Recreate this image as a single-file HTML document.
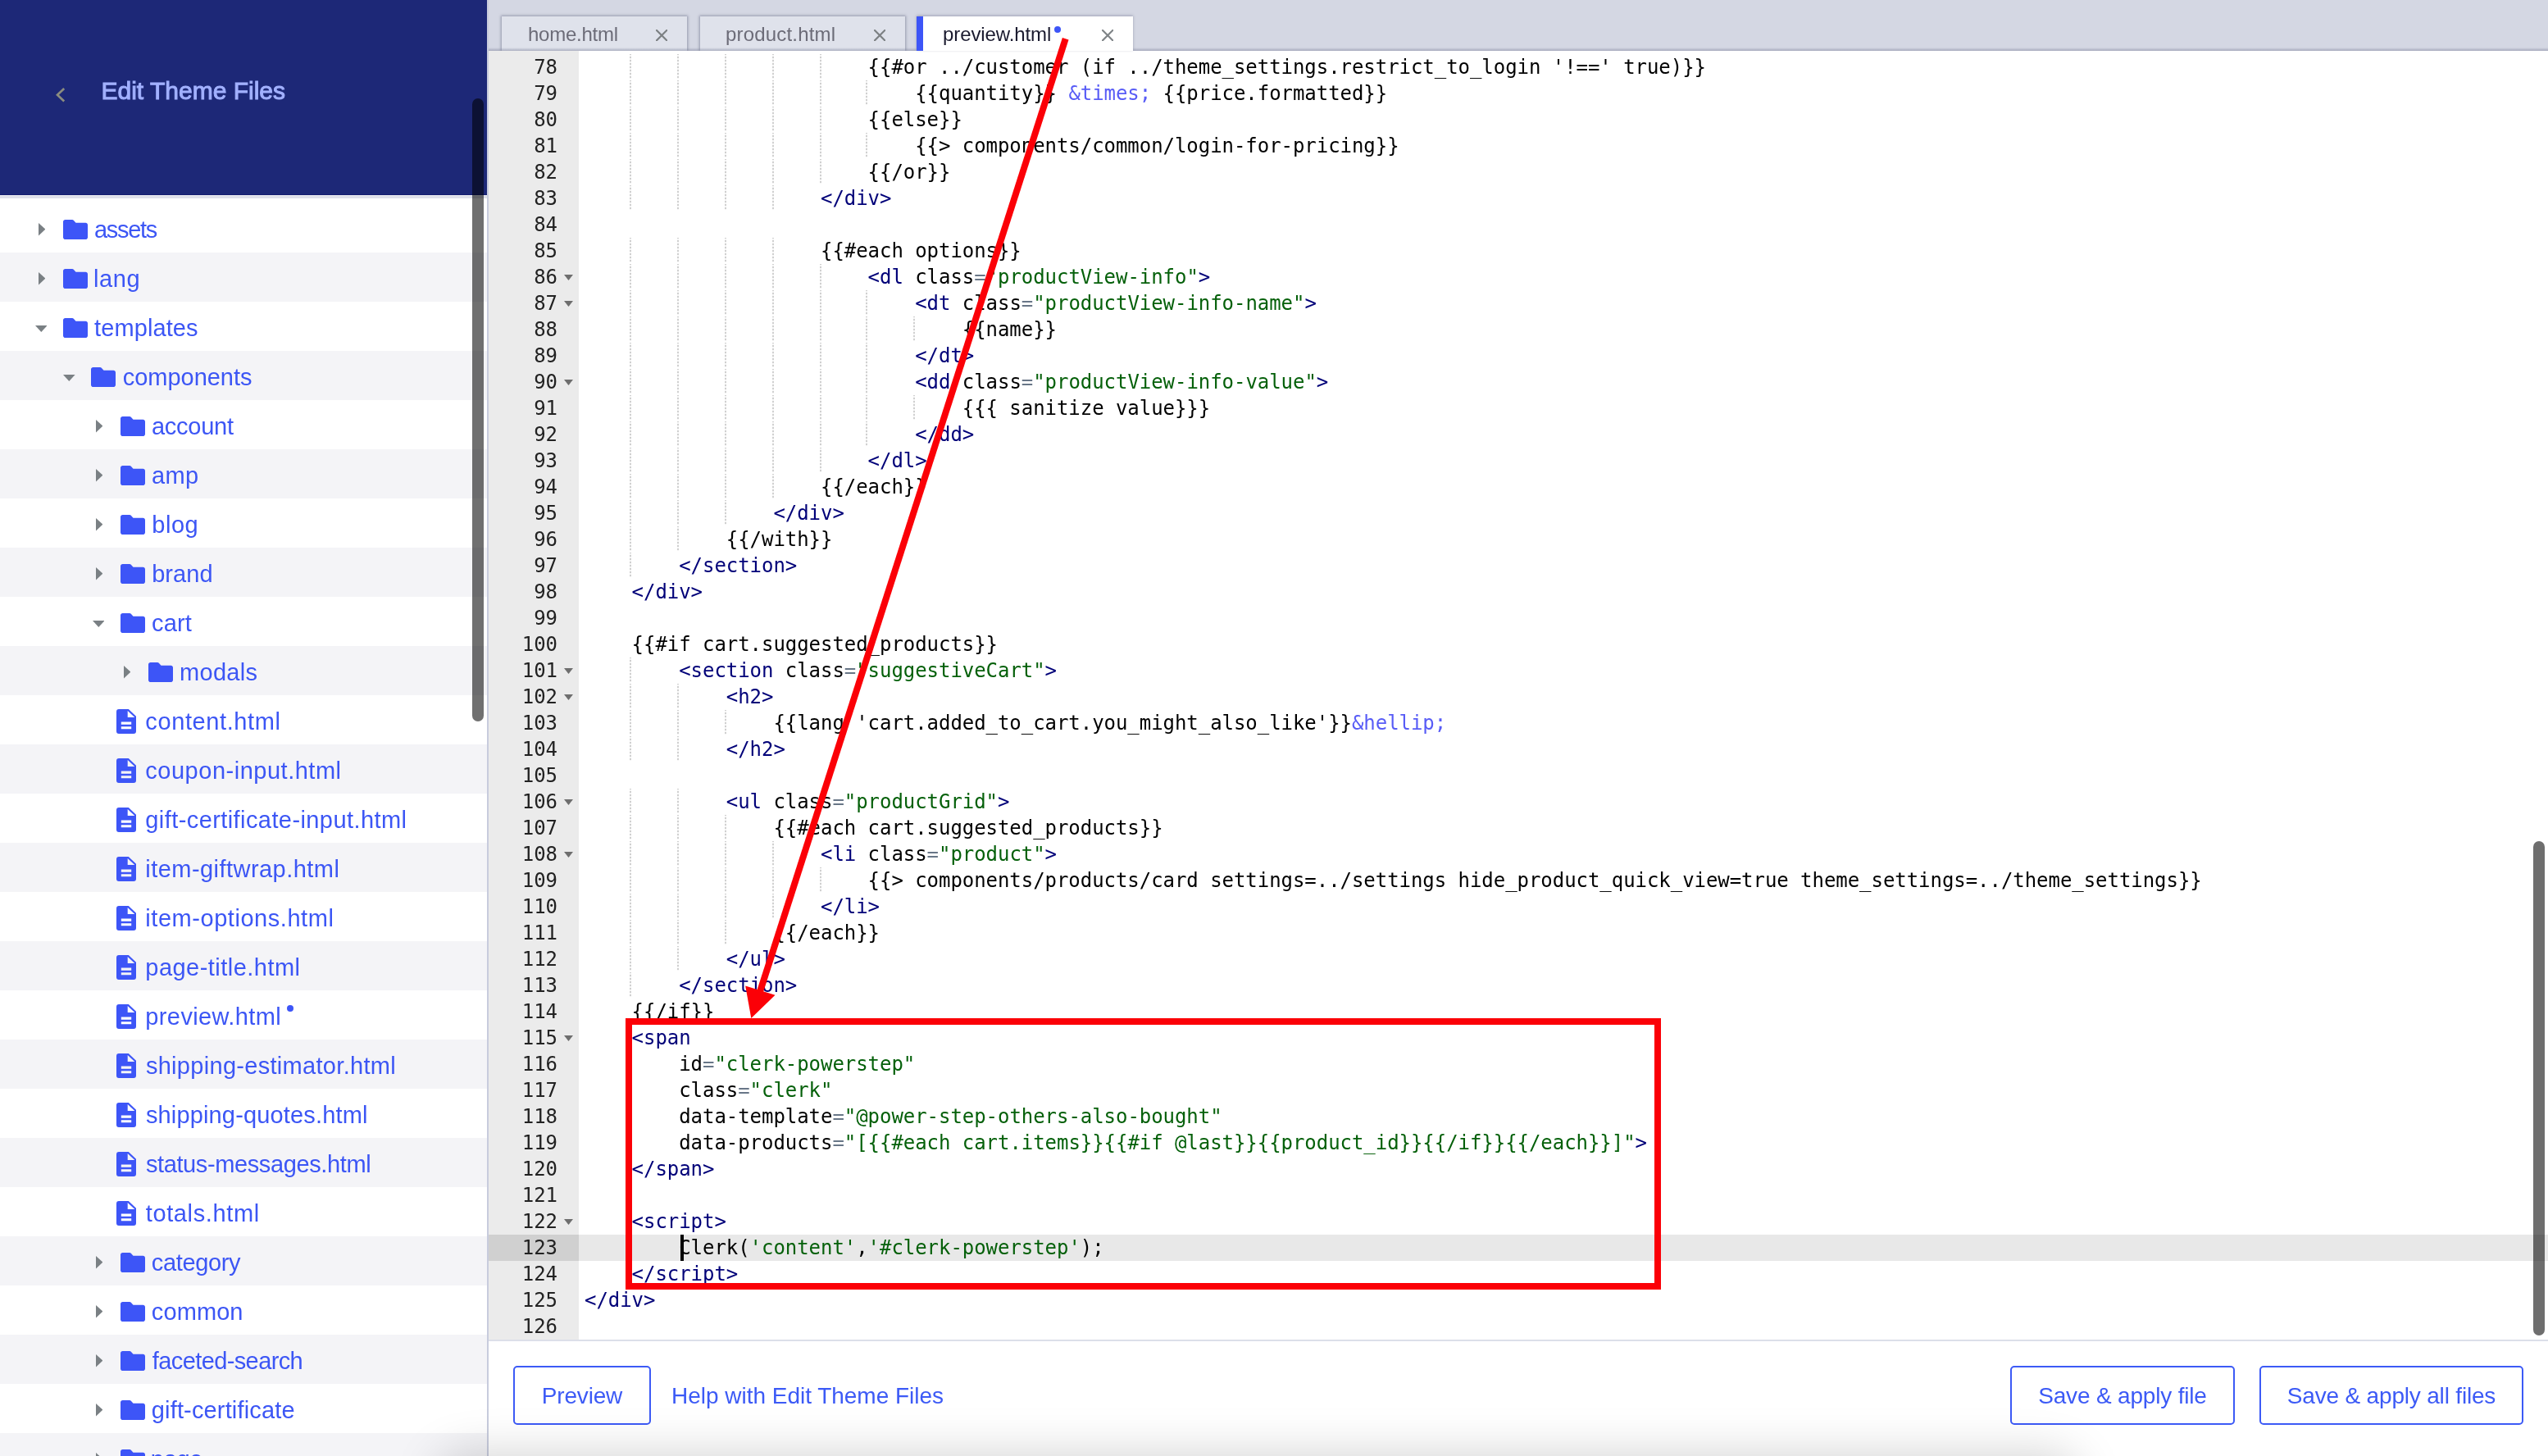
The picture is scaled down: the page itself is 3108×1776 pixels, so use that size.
<!DOCTYPE html>
<html lang="en"><head><meta charset="utf-8"><title>Edit Theme Files</title>
<style>
*{box-sizing:border-box;margin:0;padding:0}
html,body{width:3108px;height:1776px;overflow:hidden;background:#fff}
body{position:relative;will-change:transform;font-family:"Liberation Sans",sans-serif;-webkit-font-smoothing:antialiased}
#side{position:absolute;left:0;top:0;width:594px;height:1776px;background:#fff;overflow:hidden}
#hdr{position:absolute;left:0;top:0;width:594px;height:238px;background:#1d2877;border-bottom:1px solid #141d70}
#hdr .shadow{position:absolute;left:0;top:238px;width:594px;height:4px;background:linear-gradient(#ebecf2 0,#ebecf2 1px,#dfe1ea 1px,#dfe1ea 4px)}
#back{position:absolute;left:68px;top:107px}
#title{position:absolute;left:123.5px;top:88px;font-size:30px;line-height:46px;color:#a2b1ff;-webkit-text-stroke:1px #a2b1ff;white-space:nowrap}
.row{position:absolute;left:0;width:594px;height:60px;background:#fff}
.row.alt{background:#f4f4f7}
.row svg{position:absolute}
.row .ar path{fill:#7a8084}
.row .fo path,.row .fi path{fill:#3d55f7}
.lb{position:absolute;top:0;line-height:64px;font-size:29px;color:#3c56f5;white-space:nowrap}
.dot{display:inline-block;width:8px;height:8px;border-radius:50%;background:#3d55f7;margin-left:7px;vertical-align:top;margin-top:18px}
#sscroll{position:absolute;left:576px;top:120px;width:14px;height:760px;border-radius:7px;background:rgba(0,0,0,.56)}
#vline{position:absolute;left:594px;top:0;width:2px;height:1776px;background:#c8ccdd}
#tabs{position:absolute;left:596px;top:0;width:2512px;height:62px;background:#d4d7e3}
#tabs .sh{position:absolute;left:0;bottom:0;width:100%;height:4px;background:linear-gradient(rgba(120,125,150,0),rgba(120,125,150,.5));z-index:1}
.tab{position:absolute;top:20px;height:42px;background:#dfe2eb;box-shadow:0 0 3px 1px rgba(105,110,135,.6);font-size:24px;color:#6c6c78;white-space:nowrap}
.tab span{position:absolute;top:7px;line-height:30px}
.tab.on{background:#fff;color:#1b1b2f;box-shadow:0 -1px 3px 0 rgba(105,110,135,.5);z-index:2}
.tab.on:before{content:"";position:absolute;left:0;top:0;width:8px;height:42px;background:#3d55f7}
.tab svg{position:absolute;top:16px}
#ed{position:absolute;left:596px;top:62px;width:2512px;height:1572px;background:#fff;overflow:hidden;font-family:"DejaVu Sans Mono","Liberation Mono",monospace;font-size:24px}
#gutter{position:absolute;left:0;top:0;width:110px;height:1572px;background:#ebebeb;color:#222}
.gl{position:absolute;left:0;width:110px;height:32px;line-height:32px}
.gl span{position:absolute;right:26px;top:0;letter-spacing:-0.05px}
.gl.act{background:#d0d0d0}
.fd{position:absolute;left:92px;top:13px}
.fd path{fill:#6e6e6e}
#code{position:absolute;left:110px;top:0;width:2402px;height:1572px}
.cl{position:absolute;left:0;width:2402px;height:32px;line-height:32px;white-space:pre}
.cl.act{background:#e8e8e8}
.tx{position:absolute;left:7px;top:0;letter-spacing:-0.05px;color:#000}
.ig{position:absolute;top:0;width:2px;height:30px;background:repeating-linear-gradient(#d0d0d0 0,#d0d0d0 2px,#f6f6f6 2px,#f6f6f6 4px);background-position:0 -1px;background-size:2px 32px}
.t{color:#000078}.o{color:#687687}.s{color:#05600a}.e{color:#585cf6}
#cursor{position:absolute;left:124px;top:1444px;width:4px;height:32px;background:#000}
#escroll{position:absolute;left:2494px;top:964px;width:14px;height:603px;border-radius:7px;background:rgba(0,0,0,.57)}
#hline{position:absolute;left:596px;top:1634px;width:2512px;height:2px;background:#dcdfe9}
#bar{position:absolute;left:596px;top:1636px;width:2512px;height:140px;background:#fff}
.btn{position:absolute;top:30px;height:72px;border:2px solid #3c5af6;border-radius:5px;color:#3c5af6;font-size:28px;line-height:70px;text-align:center;white-space:nowrap;letter-spacing:-0.18px}
#help{position:absolute;left:223px;top:31px;line-height:72px;font-size:28px;color:#3c5af6;white-space:nowrap;letter-spacing:-0.02px}
#anno{position:absolute;left:0;top:0;z-index:10}
#bshadow{position:absolute;left:560px;top:1800px;width:1950px;height:30px;border-radius:15px;box-shadow:0 0 55px 28px rgba(0,0,0,.17);z-index:5}

</style></head><body>
<div id="side">
<div class="row" style="top:248px"><svg class="ar" style="left:46.6px;top:24.4px" width="8.4" height="15.4" viewBox="0 0 8.4 15.4"><path d="M0 0v15.4L8.4 7.7z"/></svg><svg class="fo" style="left:77px;top:20px" width="30" height="24" viewBox="0 0 30 24"><path d="M2.6 0h8.4c.8 0 1.500.3 2 .9l2.500 2.900h11.900c1.400 0 2.600 1.200 2.600 2.600v15c0 1.400-1.200 2.600-2.600 2.600h-24.800c-1.400 0-2.600-1.200-2.600-2.600v-18.800c0-1.400 1.200-2.600 2.600-2.600z"/></svg><span class="lb" style="left:115.00px;letter-spacing:-1.300px">assets</span></div>
<div class="row alt" style="top:308px"><svg class="ar" style="left:46.6px;top:24.4px" width="8.4" height="15.4" viewBox="0 0 8.4 15.4"><path d="M0 0v15.4L8.4 7.7z"/></svg><svg class="fo" style="left:77px;top:20px" width="30" height="24" viewBox="0 0 30 24"><path d="M2.6 0h8.4c.8 0 1.500.3 2 .9l2.500 2.900h11.900c1.400 0 2.600 1.200 2.600 2.600v15c0 1.400-1.200 2.600-2.600 2.600h-24.800c-1.400 0-2.600-1.200-2.600-2.600v-18.800c0-1.400 1.200-2.600 2.600-2.600z"/></svg><span class="lb" style="left:114.00px;letter-spacing:0.566px">lang</span></div>
<div class="row" style="top:368px"><svg class="ar" style="left:42.8px;top:28.6px" width="14.6" height="8" viewBox="0 0 14.6 8"><path d="M0 0h14.6L7.3 8z"/></svg><svg class="fo" style="left:77px;top:20px" width="30" height="24" viewBox="0 0 30 24"><path d="M2.6 0h8.4c.8 0 1.500.3 2 .9l2.500 2.900h11.900c1.400 0 2.600 1.200 2.600 2.600v15c0 1.400-1.200 2.600-2.600 2.600h-24.800c-1.400 0-2.600-1.200-2.600-2.600v-18.800c0-1.400 1.200-2.600 2.600-2.600z"/></svg><span class="lb" style="left:115.00px;letter-spacing:0.104px">templates</span></div>
<div class="row alt" style="top:428px"><svg class="ar" style="left:77.1px;top:28.6px" width="14.6" height="8" viewBox="0 0 14.6 8"><path d="M0 0h14.6L7.3 8z"/></svg><svg class="fo" style="left:111.3px;top:20px" width="30" height="24" viewBox="0 0 30 24"><path d="M2.6 0h8.4c.8 0 1.500.3 2 .9l2.500 2.900h11.900c1.400 0 2.600 1.200 2.600 2.600v15c0 1.400-1.200 2.600-2.600 2.600h-24.800c-1.400 0-2.600-1.200-2.600-2.600v-18.800c0-1.400 1.200-2.600 2.600-2.600z"/></svg><span class="lb" style="left:149.80px;letter-spacing:-0.032px">components</span></div>
<div class="row" style="top:488px"><svg class="ar" style="left:116.6px;top:24.4px" width="8.4" height="15.4" viewBox="0 0 8.4 15.4"><path d="M0 0v15.4L8.4 7.7z"/></svg><svg class="fo" style="left:147px;top:20px" width="30" height="24" viewBox="0 0 30 24"><path d="M2.6 0h8.4c.8 0 1.500.3 2 .9l2.500 2.900h11.900c1.400 0 2.600 1.200 2.600 2.600v15c0 1.400-1.200 2.600-2.600 2.600h-24.800c-1.400 0-2.600-1.200-2.600-2.600v-18.800c0-1.400 1.200-2.600 2.600-2.600z"/></svg><span class="lb" style="left:185.00px;letter-spacing:-0.267px">account</span></div>
<div class="row alt" style="top:548px"><svg class="ar" style="left:116.6px;top:24.4px" width="8.4" height="15.4" viewBox="0 0 8.4 15.4"><path d="M0 0v15.4L8.4 7.7z"/></svg><svg class="fo" style="left:147px;top:20px" width="30" height="24" viewBox="0 0 30 24"><path d="M2.6 0h8.4c.8 0 1.500.3 2 .9l2.500 2.900h11.900c1.400 0 2.600 1.200 2.600 2.600v15c0 1.400-1.200 2.600-2.600 2.600h-24.800c-1.400 0-2.600-1.200-2.600-2.600v-18.800c0-1.400 1.200-2.600 2.600-2.600z"/></svg><span class="lb" style="left:185.00px;letter-spacing:0.300px">amp</span></div>
<div class="row" style="top:608px"><svg class="ar" style="left:116.6px;top:24.4px" width="8.4" height="15.4" viewBox="0 0 8.4 15.4"><path d="M0 0v15.4L8.4 7.7z"/></svg><svg class="fo" style="left:147px;top:20px" width="30" height="24" viewBox="0 0 30 24"><path d="M2.6 0h8.4c.8 0 1.500.3 2 .9l2.500 2.900h11.900c1.400 0 2.600 1.200 2.600 2.600v15c0 1.400-1.200 2.600-2.600 2.600h-24.800c-1.400 0-2.600-1.200-2.600-2.600v-18.800c0-1.400 1.200-2.600 2.600-2.600z"/></svg><span class="lb" style="left:185.20px;letter-spacing:0.566px">blog</span></div>
<div class="row alt" style="top:668px"><svg class="ar" style="left:116.6px;top:24.4px" width="8.4" height="15.4" viewBox="0 0 8.4 15.4"><path d="M0 0v15.4L8.4 7.7z"/></svg><svg class="fo" style="left:147px;top:20px" width="30" height="24" viewBox="0 0 30 24"><path d="M2.6 0h8.4c.8 0 1.500.3 2 .9l2.500 2.900h11.900c1.400 0 2.600 1.200 2.600 2.600v15c0 1.400-1.200 2.600-2.600 2.600h-24.800c-1.400 0-2.600-1.200-2.600-2.600v-18.800c0-1.400 1.200-2.600 2.600-2.600z"/></svg><span class="lb" style="left:185.20px;letter-spacing:0.050px">brand</span></div>
<div class="row" style="top:728px"><svg class="ar" style="left:112.8px;top:28.6px" width="14.6" height="8" viewBox="0 0 14.6 8"><path d="M0 0h14.6L7.3 8z"/></svg><svg class="fo" style="left:147px;top:20px" width="30" height="24" viewBox="0 0 30 24"><path d="M2.6 0h8.4c.8 0 1.500.3 2 .9l2.500 2.900h11.900c1.400 0 2.600 1.200 2.600 2.600v15c0 1.400-1.200 2.600-2.600 2.600h-24.800c-1.400 0-2.600-1.200-2.600-2.600v-18.800c0-1.400 1.200-2.600 2.600-2.600z"/></svg><span class="lb" style="left:185.00px;letter-spacing:0.166px">cart</span></div>
<div class="row alt" style="top:788px"><svg class="ar" style="left:150.79999999999998px;top:24.4px" width="8.4" height="15.4" viewBox="0 0 8.4 15.4"><path d="M0 0v15.4L8.4 7.7z"/></svg><svg class="fo" style="left:181.2px;top:20px" width="30" height="24" viewBox="0 0 30 24"><path d="M2.6 0h8.4c.8 0 1.500.3 2 .9l2.500 2.900h11.900c1.400 0 2.600 1.200 2.600 2.600v15c0 1.400-1.200 2.600-2.600 2.600h-24.800c-1.400 0-2.600-1.200-2.600-2.600v-18.800c0-1.400 1.200-2.600 2.600-2.600z"/></svg><span class="lb" style="left:219.00px;letter-spacing:0.300px">modals</span></div>
<div class="row" style="top:848px"><svg class="fi" style="left:142px;top:17px" width="24" height="30" viewBox="0 0 24 30"><path fill-rule="evenodd" d="M3 0h11.800l9.200 8.800v18.200a3 3 0 0 1-3 3H3a3 3 0 0 1-3-3V3a3 3 0 0 1 3-3zm10.700 2.100v7.900h8.600zM5.800 15.500v3.300h12.400v-3.300zm0 5.700v3h12.400v-3z"/></svg><span class="lb" style="left:177.30px;letter-spacing:0.609px">content.html</span></div>
<div class="row alt" style="top:908px"><svg class="fi" style="left:142px;top:17px" width="24" height="30" viewBox="0 0 24 30"><path fill-rule="evenodd" d="M3 0h11.800l9.200 8.800v18.200a3 3 0 0 1-3 3H3a3 3 0 0 1-3-3V3a3 3 0 0 1 3-3zm10.700 2.100v7.900h8.600zM5.800 15.500v3.300h12.400v-3.300zm0 5.700v3h12.400v-3z"/></svg><span class="lb" style="left:177.30px;letter-spacing:0.514px">coupon-input.html</span></div>
<div class="row" style="top:968px"><svg class="fi" style="left:142px;top:17px" width="24" height="30" viewBox="0 0 24 30"><path fill-rule="evenodd" d="M3 0h11.800l9.200 8.800v18.200a3 3 0 0 1-3 3H3a3 3 0 0 1-3-3V3a3 3 0 0 1 3-3zm10.700 2.100v7.900h8.600zM5.800 15.500v3.300h12.400v-3.300zm0 5.700v3h12.400v-3z"/></svg><span class="lb" style="left:177.30px;letter-spacing:0.416px">gift-certificate-input.html</span></div>
<div class="row alt" style="top:1028px"><svg class="fi" style="left:142px;top:17px" width="24" height="30" viewBox="0 0 24 30"><path fill-rule="evenodd" d="M3 0h11.800l9.200 8.800v18.200a3 3 0 0 1-3 3H3a3 3 0 0 1-3-3V3a3 3 0 0 1 3-3zm10.700 2.100v7.900h8.600zM5.800 15.500v3.300h12.400v-3.300zm0 5.700v3h12.400v-3z"/></svg><span class="lb" style="left:177.30px;letter-spacing:0.454px">item-giftwrap.html</span></div>
<div class="row" style="top:1088px"><svg class="fi" style="left:142px;top:17px" width="24" height="30" viewBox="0 0 24 30"><path fill-rule="evenodd" d="M3 0h11.800l9.200 8.800v18.200a3 3 0 0 1-3 3H3a3 3 0 0 1-3-3V3a3 3 0 0 1 3-3zm10.700 2.100v7.900h8.600zM5.800 15.500v3.300h12.400v-3.300zm0 5.700v3h12.400v-3z"/></svg><span class="lb" style="left:177.30px;letter-spacing:0.549px">item-options.html</span></div>
<div class="row alt" style="top:1148px"><svg class="fi" style="left:142px;top:17px" width="24" height="30" viewBox="0 0 24 30"><path fill-rule="evenodd" d="M3 0h11.800l9.200 8.800v18.200a3 3 0 0 1-3 3H3a3 3 0 0 1-3-3V3a3 3 0 0 1 3-3zm10.700 2.100v7.900h8.600zM5.800 15.500v3.300h12.400v-3.300zm0 5.700v3h12.400v-3z"/></svg><span class="lb" style="left:177.30px;letter-spacing:0.470px">page-title.html</span></div>
<div class="row" style="top:1208px"><svg class="fi" style="left:142px;top:17px" width="24" height="30" viewBox="0 0 24 30"><path fill-rule="evenodd" d="M3 0h11.800l9.200 8.800v18.200a3 3 0 0 1-3 3H3a3 3 0 0 1-3-3V3a3 3 0 0 1 3-3zm10.700 2.100v7.900h8.600zM5.800 15.500v3.300h12.400v-3.300zm0 5.700v3h12.400v-3z"/></svg><span class="lb" style="left:177.30px;letter-spacing:0.389px">preview.html<i class="dot"></i></span></div>
<div class="row alt" style="top:1268px"><svg class="fi" style="left:142px;top:17px" width="24" height="30" viewBox="0 0 24 30"><path fill-rule="evenodd" d="M3 0h11.800l9.200 8.800v18.200a3 3 0 0 1-3 3H3a3 3 0 0 1-3-3V3a3 3 0 0 1 3-3zm10.700 2.100v7.900h8.600zM5.800 15.500v3.300h12.400v-3.300zm0 5.700v3h12.400v-3z"/></svg><span class="lb" style="left:177.90px;letter-spacing:0.300px">shipping-estimator.html</span></div>
<div class="row" style="top:1328px"><svg class="fi" style="left:142px;top:17px" width="24" height="30" viewBox="0 0 24 30"><path fill-rule="evenodd" d="M3 0h11.800l9.200 8.800v18.200a3 3 0 0 1-3 3H3a3 3 0 0 1-3-3V3a3 3 0 0 1 3-3zm10.700 2.100v7.900h8.600zM5.800 15.500v3.300h12.400v-3.300zm0 5.700v3h12.400v-3z"/></svg><span class="lb" style="left:177.90px;letter-spacing:0.153px">shipping-quotes.html</span></div>
<div class="row alt" style="top:1388px"><svg class="fi" style="left:142px;top:17px" width="24" height="30" viewBox="0 0 24 30"><path fill-rule="evenodd" d="M3 0h11.800l9.200 8.800v18.200a3 3 0 0 1-3 3H3a3 3 0 0 1-3-3V3a3 3 0 0 1 3-3zm10.700 2.100v7.900h8.600zM5.800 15.500v3.300h12.400v-3.300zm0 5.700v3h12.400v-3z"/></svg><span class="lb" style="left:177.90px;letter-spacing:-0.386px">status-messages.html</span></div>
<div class="row" style="top:1448px"><svg class="fi" style="left:142px;top:17px" width="24" height="30" viewBox="0 0 24 30"><path fill-rule="evenodd" d="M3 0h11.800l9.200 8.800v18.200a3 3 0 0 1-3 3H3a3 3 0 0 1-3-3V3a3 3 0 0 1 3-3zm10.700 2.100v7.900h8.600zM5.800 15.500v3.300h12.400v-3.300zm0 5.700v3h12.400v-3z"/></svg><span class="lb" style="left:177.70px;letter-spacing:0.640px">totals.html</span></div>
<div class="row alt" style="top:1508px"><svg class="ar" style="left:116.6px;top:24.4px" width="8.4" height="15.4" viewBox="0 0 8.4 15.4"><path d="M0 0v15.4L8.4 7.7z"/></svg><svg class="fo" style="left:147px;top:20px" width="30" height="24" viewBox="0 0 30 24"><path d="M2.6 0h8.4c.8 0 1.500.3 2 .9l2.500 2.900h11.900c1.400 0 2.600 1.200 2.600 2.600v15c0 1.400-1.200 2.600-2.600 2.600h-24.800c-1.400 0-2.600-1.200-2.600-2.600v-18.800c0-1.400 1.200-2.600 2.600-2.600z"/></svg><span class="lb" style="left:184.80px;letter-spacing:-0.358px">category</span></div>
<div class="row" style="top:1568px"><svg class="ar" style="left:116.6px;top:24.4px" width="8.4" height="15.4" viewBox="0 0 8.4 15.4"><path d="M0 0v15.4L8.4 7.7z"/></svg><svg class="fo" style="left:147px;top:20px" width="30" height="24" viewBox="0 0 30 24"><path d="M2.6 0h8.4c.8 0 1.500.3 2 .9l2.500 2.900h11.900c1.400 0 2.600 1.200 2.600 2.600v15c0 1.400-1.200 2.600-2.600 2.600h-24.800c-1.400 0-2.600-1.200-2.600-2.600v-18.800c0-1.400 1.200-2.600 2.600-2.600z"/></svg><span class="lb" style="left:184.80px;letter-spacing:0.100px">common</span></div>
<div class="row alt" style="top:1628px"><svg class="ar" style="left:116.6px;top:24.4px" width="8.4" height="15.4" viewBox="0 0 8.4 15.4"><path d="M0 0v15.4L8.4 7.7z"/></svg><svg class="fo" style="left:147px;top:20px" width="30" height="24" viewBox="0 0 30 24"><path d="M2.6 0h8.4c.8 0 1.500.3 2 .9l2.500 2.900h11.900c1.400 0 2.600 1.200 2.600 2.600v15c0 1.400-1.200 2.600-2.600 2.600h-24.800c-1.400 0-2.600-1.200-2.600-2.600v-18.800c0-1.400 1.200-2.600 2.600-2.600z"/></svg><span class="lb" style="left:185.80px;letter-spacing:-0.608px">faceted-search</span></div>
<div class="row" style="top:1688px"><svg class="ar" style="left:116.6px;top:24.4px" width="8.4" height="15.4" viewBox="0 0 8.4 15.4"><path d="M0 0v15.4L8.4 7.7z"/></svg><svg class="fo" style="left:147px;top:20px" width="30" height="24" viewBox="0 0 30 24"><path d="M2.6 0h8.4c.8 0 1.500.3 2 .9l2.500 2.900h11.900c1.400 0 2.600 1.200 2.600 2.600v15c0 1.400-1.200 2.600-2.600 2.600h-24.800c-1.400 0-2.600-1.200-2.600-2.600v-18.800c0-1.400 1.200-2.600 2.600-2.600z"/></svg><span class="lb" style="left:184.80px;letter-spacing:0.152px">gift-certificate</span></div>
<div class="row alt" style="top:1748px"><svg class="ar" style="left:116.6px;top:24.4px" width="8.4" height="15.4" viewBox="0 0 8.4 15.4"><path d="M0 0v15.4L8.4 7.7z"/></svg><svg class="fo" style="left:147px;top:20px" width="30" height="24" viewBox="0 0 30 24"><path d="M2.6 0h8.4c.8 0 1.500.3 2 .9l2.500 2.900h11.900c1.400 0 2.600 1.200 2.600 2.600v15c0 1.400-1.200 2.600-2.600 2.600h-24.800c-1.400 0-2.600-1.200-2.600-2.600v-18.800c0-1.400 1.200-2.600 2.600-2.600z"/></svg><span class="lb" style="left:183.80px;letter-spacing:-0.300px">page</span></div>
<div id="hdr"><div class="shadow"></div>
<svg id="back" width="14" height="20" viewBox="0 0 14 20"><path d="M10.200 1L2 8.800l8.200 7.800" fill="none" stroke="#8b8d7f" stroke-width="2.700"/></svg>
<div id="title">Edit Theme Files</div></div>
<div id="sscroll"></div>
</div>
<div id="vline"></div>
<div id="tabs">
<div class="tab" style="left:16px;width:226px"><span style="left:32px;letter-spacing:-0.25px">home.html</span><svg style="left:187.700px" width="14.300" height="14.300" viewBox="0 0 14.300 14.300"><path d="M1 1l12.300 12.300M13.300 1L1 13.300" stroke="#7c8083" stroke-width="2.200" stroke-linecap="round" fill="none"/></svg></div>
<div class="tab" style="left:258px;width:250px"><span style="left:31px;letter-spacing:0.18px">product.html</span><svg style="left:211.800px" width="14.300" height="14.300" viewBox="0 0 14.300 14.300"><path d="M1 1l12.300 12.300M13.300 1L1 13.300" stroke="#7c8083" stroke-width="2.200" stroke-linecap="round" fill="none"/></svg></div>
<div class="tab on" style="left:522px;width:264px"><span style="left:32px;letter-spacing:-0.1px">preview.html</span><i class="dot" style="position:absolute;left:168px;top:12px;margin:0"></i><svg style="left:225.800px" width="14.300" height="14.300" viewBox="0 0 14.300 14.300"><path d="M1 1l12.300 12.300M13.300 1L1 13.300" stroke="#7f8487" stroke-width="2.200" stroke-linecap="round" fill="none"/></svg></div>
<div class="sh"></div>
</div>
<div id="ed">
<div id="code">
<div class="cl" style="top:4px"><i class="ig" style="left:62px"></i><i class="ig" style="left:120px"></i><i class="ig" style="left:178px"></i><i class="ig" style="left:236px"></i><i class="ig" style="left:294px"></i><span class="tx">                        {{#or ../customer (if ../theme_settings.restrict_to_login '!==' true)}}</span></div>
<div class="cl" style="top:36px"><i class="ig" style="left:62px"></i><i class="ig" style="left:120px"></i><i class="ig" style="left:178px"></i><i class="ig" style="left:236px"></i><i class="ig" style="left:294px"></i><i class="ig" style="left:350px"></i><span class="tx">                            {{quantity}} <span class="e">&amp;times;</span> {{price.formatted}}</span></div>
<div class="cl" style="top:68px"><i class="ig" style="left:62px"></i><i class="ig" style="left:120px"></i><i class="ig" style="left:178px"></i><i class="ig" style="left:236px"></i><i class="ig" style="left:294px"></i><span class="tx">                        {{else}}</span></div>
<div class="cl" style="top:100px"><i class="ig" style="left:62px"></i><i class="ig" style="left:120px"></i><i class="ig" style="left:178px"></i><i class="ig" style="left:236px"></i><i class="ig" style="left:294px"></i><i class="ig" style="left:350px"></i><span class="tx">                            {{&gt; components/common/login-for-pricing}}</span></div>
<div class="cl" style="top:132px"><i class="ig" style="left:62px"></i><i class="ig" style="left:120px"></i><i class="ig" style="left:178px"></i><i class="ig" style="left:236px"></i><i class="ig" style="left:294px"></i><span class="tx">                        {{/or}}</span></div>
<div class="cl" style="top:164px"><i class="ig" style="left:62px"></i><i class="ig" style="left:120px"></i><i class="ig" style="left:178px"></i><i class="ig" style="left:236px"></i><span class="tx">                    <span class="t">&lt;/div&gt;</span></span></div>
<div class="cl" style="top:196px"><span class="tx"></span></div>
<div class="cl" style="top:228px"><i class="ig" style="left:62px"></i><i class="ig" style="left:120px"></i><i class="ig" style="left:178px"></i><i class="ig" style="left:236px"></i><span class="tx">                    {{#each options}}</span></div>
<div class="cl" style="top:260px"><i class="ig" style="left:62px"></i><i class="ig" style="left:120px"></i><i class="ig" style="left:178px"></i><i class="ig" style="left:236px"></i><i class="ig" style="left:294px"></i><span class="tx">                        <span class="t">&lt;dl</span> class<span class="o">=</span><span class="s">"productView-info"</span><span class="t">&gt;</span></span></div>
<div class="cl" style="top:292px"><i class="ig" style="left:62px"></i><i class="ig" style="left:120px"></i><i class="ig" style="left:178px"></i><i class="ig" style="left:236px"></i><i class="ig" style="left:294px"></i><i class="ig" style="left:350px"></i><span class="tx">                            <span class="t">&lt;dt</span> class<span class="o">=</span><span class="s">"productView-info-name"</span><span class="t">&gt;</span></span></div>
<div class="cl" style="top:324px"><i class="ig" style="left:62px"></i><i class="ig" style="left:120px"></i><i class="ig" style="left:178px"></i><i class="ig" style="left:236px"></i><i class="ig" style="left:294px"></i><i class="ig" style="left:350px"></i><i class="ig" style="left:408px"></i><span class="tx">                                {{name}}</span></div>
<div class="cl" style="top:356px"><i class="ig" style="left:62px"></i><i class="ig" style="left:120px"></i><i class="ig" style="left:178px"></i><i class="ig" style="left:236px"></i><i class="ig" style="left:294px"></i><i class="ig" style="left:350px"></i><span class="tx">                            <span class="t">&lt;/dt&gt;</span></span></div>
<div class="cl" style="top:388px"><i class="ig" style="left:62px"></i><i class="ig" style="left:120px"></i><i class="ig" style="left:178px"></i><i class="ig" style="left:236px"></i><i class="ig" style="left:294px"></i><i class="ig" style="left:350px"></i><span class="tx">                            <span class="t">&lt;dd</span> class<span class="o">=</span><span class="s">"productView-info-value"</span><span class="t">&gt;</span></span></div>
<div class="cl" style="top:420px"><i class="ig" style="left:62px"></i><i class="ig" style="left:120px"></i><i class="ig" style="left:178px"></i><i class="ig" style="left:236px"></i><i class="ig" style="left:294px"></i><i class="ig" style="left:350px"></i><i class="ig" style="left:408px"></i><span class="tx">                                {{{ sanitize value}}}</span></div>
<div class="cl" style="top:452px"><i class="ig" style="left:62px"></i><i class="ig" style="left:120px"></i><i class="ig" style="left:178px"></i><i class="ig" style="left:236px"></i><i class="ig" style="left:294px"></i><i class="ig" style="left:350px"></i><span class="tx">                            <span class="t">&lt;/dd&gt;</span></span></div>
<div class="cl" style="top:484px"><i class="ig" style="left:62px"></i><i class="ig" style="left:120px"></i><i class="ig" style="left:178px"></i><i class="ig" style="left:236px"></i><i class="ig" style="left:294px"></i><span class="tx">                        <span class="t">&lt;/dl&gt;</span></span></div>
<div class="cl" style="top:516px"><i class="ig" style="left:62px"></i><i class="ig" style="left:120px"></i><i class="ig" style="left:178px"></i><i class="ig" style="left:236px"></i><span class="tx">                    {{/each}}</span></div>
<div class="cl" style="top:548px"><i class="ig" style="left:62px"></i><i class="ig" style="left:120px"></i><i class="ig" style="left:178px"></i><span class="tx">                <span class="t">&lt;/div&gt;</span></span></div>
<div class="cl" style="top:580px"><i class="ig" style="left:62px"></i><i class="ig" style="left:120px"></i><span class="tx">            {{/with}}</span></div>
<div class="cl" style="top:612px"><i class="ig" style="left:62px"></i><span class="tx">        <span class="t">&lt;/section&gt;</span></span></div>
<div class="cl" style="top:644px"><span class="tx">    <span class="t">&lt;/div&gt;</span></span></div>
<div class="cl" style="top:676px"><span class="tx"></span></div>
<div class="cl" style="top:708px"><span class="tx">    {{#if cart.suggested_products}}</span></div>
<div class="cl" style="top:740px"><i class="ig" style="left:62px"></i><span class="tx">        <span class="t">&lt;section</span> class<span class="o">=</span><span class="s">"suggestiveCart"</span><span class="t">&gt;</span></span></div>
<div class="cl" style="top:772px"><i class="ig" style="left:62px"></i><i class="ig" style="left:120px"></i><span class="tx">            <span class="t">&lt;h2&gt;</span></span></div>
<div class="cl" style="top:804px"><i class="ig" style="left:62px"></i><i class="ig" style="left:120px"></i><i class="ig" style="left:178px"></i><span class="tx">                {{lang 'cart.added_to_cart.you_might_also_like'}}<span class="e">&amp;hellip;</span></span></div>
<div class="cl" style="top:836px"><i class="ig" style="left:62px"></i><i class="ig" style="left:120px"></i><span class="tx">            <span class="t">&lt;/h2&gt;</span></span></div>
<div class="cl" style="top:868px"><span class="tx"></span></div>
<div class="cl" style="top:900px"><i class="ig" style="left:62px"></i><i class="ig" style="left:120px"></i><span class="tx">            <span class="t">&lt;ul</span> class<span class="o">=</span><span class="s">"productGrid"</span><span class="t">&gt;</span></span></div>
<div class="cl" style="top:932px"><i class="ig" style="left:62px"></i><i class="ig" style="left:120px"></i><i class="ig" style="left:178px"></i><span class="tx">                {{#each cart.suggested_products}}</span></div>
<div class="cl" style="top:964px"><i class="ig" style="left:62px"></i><i class="ig" style="left:120px"></i><i class="ig" style="left:178px"></i><i class="ig" style="left:236px"></i><span class="tx">                    <span class="t">&lt;li</span> class<span class="o">=</span><span class="s">"product"</span><span class="t">&gt;</span></span></div>
<div class="cl" style="top:996px"><i class="ig" style="left:62px"></i><i class="ig" style="left:120px"></i><i class="ig" style="left:178px"></i><i class="ig" style="left:236px"></i><i class="ig" style="left:294px"></i><span class="tx">                        {{&gt; components/products/card settings=../settings hide_product_quick_view=true theme_settings=../theme_settings}}</span></div>
<div class="cl" style="top:1028px"><i class="ig" style="left:62px"></i><i class="ig" style="left:120px"></i><i class="ig" style="left:178px"></i><i class="ig" style="left:236px"></i><span class="tx">                    <span class="t">&lt;/li&gt;</span></span></div>
<div class="cl" style="top:1060px"><i class="ig" style="left:62px"></i><i class="ig" style="left:120px"></i><i class="ig" style="left:178px"></i><span class="tx">                {{/each}}</span></div>
<div class="cl" style="top:1092px"><i class="ig" style="left:62px"></i><i class="ig" style="left:120px"></i><span class="tx">            <span class="t">&lt;/ul&gt;</span></span></div>
<div class="cl" style="top:1124px"><i class="ig" style="left:62px"></i><span class="tx">        <span class="t">&lt;/section&gt;</span></span></div>
<div class="cl" style="top:1156px"><span class="tx">    {{/if}}</span></div>
<div class="cl" style="top:1188px"><span class="tx">    <span class="t">&lt;span</span></span></div>
<div class="cl" style="top:1220px"><i class="ig" style="left:62px"></i><span class="tx">        id<span class="o">=</span><span class="s">"clerk-powerstep"</span></span></div>
<div class="cl" style="top:1252px"><i class="ig" style="left:62px"></i><span class="tx">        class<span class="o">=</span><span class="s">"clerk"</span></span></div>
<div class="cl" style="top:1284px"><i class="ig" style="left:62px"></i><span class="tx">        data-template<span class="o">=</span><span class="s">"@power-step-others-also-bought"</span></span></div>
<div class="cl" style="top:1316px"><i class="ig" style="left:62px"></i><span class="tx">        data-products<span class="o">=</span><span class="s">"[{{#each cart.items}}{{#if @last}}{{product_id}}{{/if}}{{/each}}]"</span><span class="t">&gt;</span></span></div>
<div class="cl" style="top:1348px"><span class="tx">    <span class="t">&lt;/span&gt;</span></span></div>
<div class="cl" style="top:1380px"><span class="tx"></span></div>
<div class="cl" style="top:1412px"><span class="tx">    <span class="t">&lt;script&gt;</span></span></div>
<div class="cl act" style="top:1444px"><i class="ig" style="left:62px"></i><span class="tx">        Clerk(<span class="s">'content'</span>,<span class="s">'#clerk-powerstep'</span>);</span></div>
<div class="cl" style="top:1476px"><span class="tx">    <span class="t">&lt;/script&gt;</span></span></div>
<div class="cl" style="top:1508px"><span class="tx"><span class="t">&lt;/div&gt;</span></span></div>
<div class="cl" style="top:1540px"><span class="tx"></span></div>
<div id="cursor"></div>
</div>
<div id="gutter">
<div class="gl" style="top:4px"><span>78</span></div>
<div class="gl" style="top:36px"><span>79</span></div>
<div class="gl" style="top:68px"><span>80</span></div>
<div class="gl" style="top:100px"><span>81</span></div>
<div class="gl" style="top:132px"><span>82</span></div>
<div class="gl" style="top:164px"><span>83</span></div>
<div class="gl" style="top:196px"><span>84</span></div>
<div class="gl" style="top:228px"><span>85</span></div>
<div class="gl" style="top:260px"><span>86</span><svg class="fd" width="11" height="7" viewBox="0 0 11 7"><path d="M0 0h11L5.500 7z"/></svg></div>
<div class="gl" style="top:292px"><span>87</span><svg class="fd" width="11" height="7" viewBox="0 0 11 7"><path d="M0 0h11L5.500 7z"/></svg></div>
<div class="gl" style="top:324px"><span>88</span></div>
<div class="gl" style="top:356px"><span>89</span></div>
<div class="gl" style="top:388px"><span>90</span><svg class="fd" width="11" height="7" viewBox="0 0 11 7"><path d="M0 0h11L5.500 7z"/></svg></div>
<div class="gl" style="top:420px"><span>91</span></div>
<div class="gl" style="top:452px"><span>92</span></div>
<div class="gl" style="top:484px"><span>93</span></div>
<div class="gl" style="top:516px"><span>94</span></div>
<div class="gl" style="top:548px"><span>95</span></div>
<div class="gl" style="top:580px"><span>96</span></div>
<div class="gl" style="top:612px"><span>97</span></div>
<div class="gl" style="top:644px"><span>98</span></div>
<div class="gl" style="top:676px"><span>99</span></div>
<div class="gl" style="top:708px"><span>100</span></div>
<div class="gl" style="top:740px"><span>101</span><svg class="fd" width="11" height="7" viewBox="0 0 11 7"><path d="M0 0h11L5.500 7z"/></svg></div>
<div class="gl" style="top:772px"><span>102</span><svg class="fd" width="11" height="7" viewBox="0 0 11 7"><path d="M0 0h11L5.500 7z"/></svg></div>
<div class="gl" style="top:804px"><span>103</span></div>
<div class="gl" style="top:836px"><span>104</span></div>
<div class="gl" style="top:868px"><span>105</span></div>
<div class="gl" style="top:900px"><span>106</span><svg class="fd" width="11" height="7" viewBox="0 0 11 7"><path d="M0 0h11L5.500 7z"/></svg></div>
<div class="gl" style="top:932px"><span>107</span></div>
<div class="gl" style="top:964px"><span>108</span><svg class="fd" width="11" height="7" viewBox="0 0 11 7"><path d="M0 0h11L5.500 7z"/></svg></div>
<div class="gl" style="top:996px"><span>109</span></div>
<div class="gl" style="top:1028px"><span>110</span></div>
<div class="gl" style="top:1060px"><span>111</span></div>
<div class="gl" style="top:1092px"><span>112</span></div>
<div class="gl" style="top:1124px"><span>113</span></div>
<div class="gl" style="top:1156px"><span>114</span></div>
<div class="gl" style="top:1188px"><span>115</span><svg class="fd" width="11" height="7" viewBox="0 0 11 7"><path d="M0 0h11L5.500 7z"/></svg></div>
<div class="gl" style="top:1220px"><span>116</span></div>
<div class="gl" style="top:1252px"><span>117</span></div>
<div class="gl" style="top:1284px"><span>118</span></div>
<div class="gl" style="top:1316px"><span>119</span></div>
<div class="gl" style="top:1348px"><span>120</span></div>
<div class="gl" style="top:1380px"><span>121</span></div>
<div class="gl" style="top:1412px"><span>122</span><svg class="fd" width="11" height="7" viewBox="0 0 11 7"><path d="M0 0h11L5.500 7z"/></svg></div>
<div class="gl act" style="top:1444px"><span>123</span></div>
<div class="gl" style="top:1476px"><span>124</span></div>
<div class="gl" style="top:1508px"><span>125</span></div>
<div class="gl" style="top:1540px"><span>126</span></div>
</div>
<div id="escroll"></div>
</div>
<div id="hline"></div>
<div id="bar">
<div class="btn" style="left:30px;width:168px">Preview</div>
<div id="help">Help with Edit Theme Files</div>
<div class="btn" style="left:1856px;width:274px">Save &amp; apply file</div>
<div class="btn" style="left:2160px;width:322px">Save &amp; apply all files</div>
</div>
<div id="bshadow"></div>
<svg id="anno" width="3108" height="1776" viewBox="0 0 3108 1776">
<rect x="767" y="1246" width="1255" height="323" fill="none" stroke="#fb0007" stroke-width="8"/>
<path d="M1299.700 47.300L924 1219" stroke="#fb0007" stroke-width="8" fill="none"/>
<path d="M916.300 1242L909.200 1202.400L945.500 1213.800z" fill="#fb0007"/>
</svg>
</body></html>
